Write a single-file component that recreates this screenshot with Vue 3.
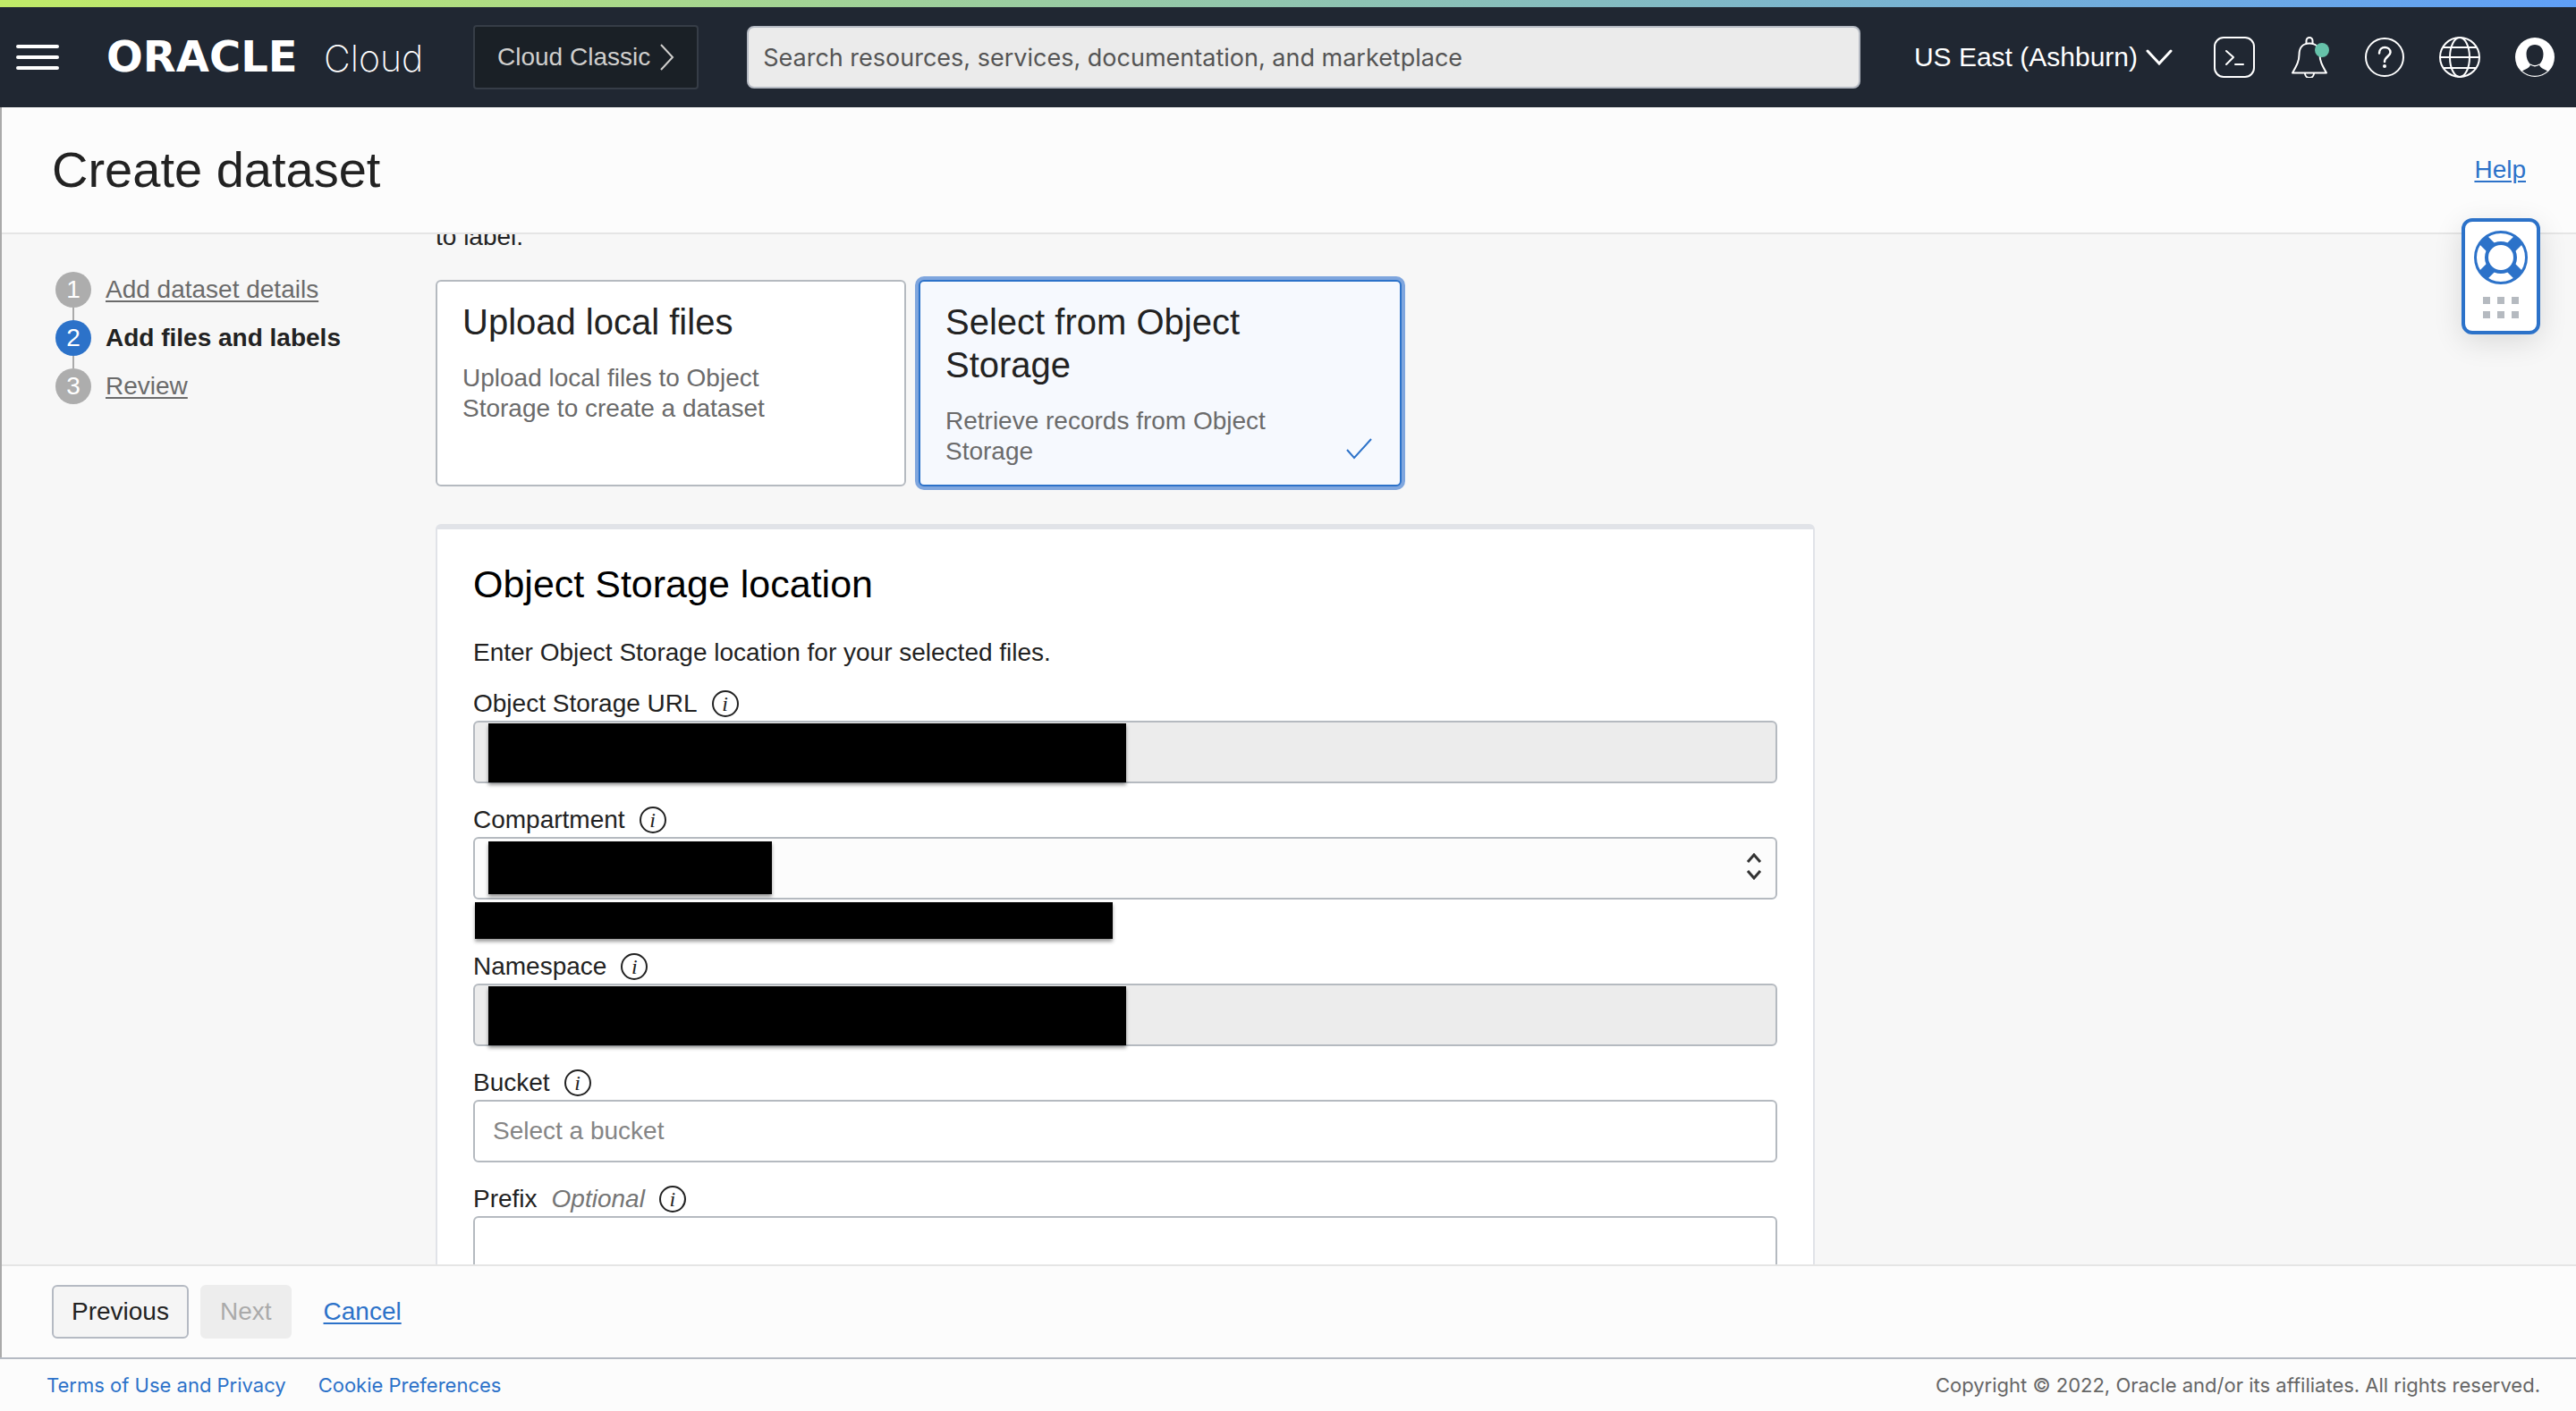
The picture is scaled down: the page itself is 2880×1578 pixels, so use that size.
<script setup>
import { ref } from 'vue'

const steps = [
  { number: 1, label: 'Add dataset details' },
  { number: 2, label: 'Add files and labels', current: true },
  { number: 3, label: 'Review' },
]

const source = ref('storage')
const sources = [
  { id: 'local', title: 'Upload local files', text: 'Upload local files to Object Storage to create a dataset' },
  { id: 'storage', title: 'Select from Object Storage', text: 'Retrieve records from Object Storage' },
]

const fields = [
  { id: 'url', label: 'Object Storage URL', disabled: true, mask: 'wide' },
  { id: 'compartment', label: 'Compartment', select: true, mask: 'short', hint: true },
  { id: 'namespace', label: 'Namespace', disabled: true, mask: 'wide' },
  { id: 'bucket', label: 'Bucket', placeholder: 'Select a bucket' },
  { id: 'prefix', label: 'Prefix', optional: true },
]
</script>

<template>
  <div class="page">
    <header class="topbar">
      <button class="icon-btn menu" aria-label="Menu">
        <svg width="48" height="28" viewBox="0 0 48 28">
          <path d="M2 2H46M2 14H46M2 26H46" stroke="#fff" stroke-width="4" stroke-linecap="round" />
        </svg>
      </button>
      <a class="brand" href="#"><span class="brand-name">ORACLE</span><span class="brand-product">Cloud</span></a>
      <button class="classic">
        Cloud Classic
        <svg width="16" height="30" viewBox="0 0 16 30" fill="none" stroke="currentColor" stroke-width="2">
          <path d="M1 1L14 15L1 29" />
        </svg>
      </button>
      <input class="search" type="search" aria-label="Search" placeholder="Search resources, services, documentation, and marketplace">
      <button class="region">
        US East (Ashburn)
        <svg width="30" height="18" viewBox="0 0 30 18" fill="none" stroke="#fff" stroke-width="3" stroke-linecap="round">
          <path d="M2 2L15 16L28 2" />
        </svg>
      </button>
      <nav class="tools" aria-label="Tools">
        <button class="icon-btn" aria-label="Developer tools">
          <svg width="46" height="46" viewBox="0 0 46 46" fill="none" stroke="#fff" stroke-width="2">
            <rect x="1" y="1" width="44" height="44" rx="10" />
            <path d="M14 16L22 23L14 31M24 31H33" stroke-linecap="round" stroke-linejoin="round" />
          </svg>
        </button>
        <button class="icon-btn" aria-label="Announcements">
          <svg width="46" height="46" viewBox="0 0 46 46" fill="none" stroke="#fff" stroke-width="2">
            <path d="M19.500 8V4.500a3.500 3.500 0 0 1 7 0V8M18 41a5 5 0 0 0 10 0" />
            <path d="M4 40.500C9 32 11.500 27 11.500 20C11.500 12 16 7.500 23 7.500S34.500 12 34.500 20C34.500 27 37 32 42 40.500Z" stroke-linejoin="round" />
            <circle cx="37" cy="15" r="8" fill="#66c2aa" stroke="none" />
          </svg>
        </button>
        <button class="icon-btn" aria-label="Help">
          <svg width="46" height="46" viewBox="0 0 46 46" fill="none" stroke="#fff" stroke-width="2">
            <circle cx="23" cy="23" r="21" />
            <path d="M17 18.500C17 9.500 29.500 10.500 29.500 17.500C29.500 22 23 22 23 28" stroke-width="2.500" stroke-linecap="round" />
            <circle cx="23" cy="33" r="2" fill="#fff" stroke="none" />
          </svg>
        </button>
        <button class="icon-btn" aria-label="Language">
          <svg width="46" height="46" viewBox="0 0 46 46" fill="none" stroke="#fff" stroke-width="2">
            <circle cx="23" cy="23" r="22" />
            <ellipse cx="23" cy="23" rx="11" ry="22" />
            <path d="M1 23H45M5 12H41M5 35H41" />
          </svg>
        </button>
        <button class="icon-btn" aria-label="Profile">
          <svg width="46" height="46" viewBox="0 0 46 46">
            <circle cx="23" cy="23" r="22" fill="#fff" />
            <path d="M9 38.500C13 36 18 34.500 18 31C15 28 13.500 24 13.500 19.500C13.500 13 17.500 9 23 9S32.500 13 32.500 19.500C32.500 24 31 28 28 31C28 34.500 33 36 37 38.500C29 45.500 17 45.500 9 38.500Z" fill="#202732" />
            <path d="M18 31C21 33 25 33 28 31" fill="none" stroke="#fff" stroke-width="1.500" />
          </svg>
        </button>
      </nav>
    </header>

    <div class="workspace">
      <div class="titlebar">
        <h1>Create dataset</h1>
        <a href="#">Help</a>
        <button class="support" aria-label="Support">
          <svg width="60" height="60" viewBox="0 0 60 60" fill="none" stroke="#2c72c9">
            <path d="M10.500 10.500L19 19M49.500 10.500L41 19M10.500 49.500L19 41M49.500 49.500L41 41" stroke-width="13" />
            <circle cx="30" cy="30" r="28.500" stroke-width="3" />
            <circle cx="30" cy="30" r="16" stroke-width="4" />
          </svg>
          <svg width="40" height="24" viewBox="0 0 40 24" fill="none" stroke="#b5bac0" stroke-width="8">
            <path d="M0 4H40M0 20H40" stroke-dasharray="8 8" />
          </svg>
        </button>
      </div>

      <div class="body">
        <nav class="steps" aria-label="Steps">
          <ol>
            <li v-for="s in steps" :key="s.number" :class="{ current: s.current }">
              <span class="bubble">{{ s.number }}</span>
              <strong v-if="s.current">{{ s.label }}</strong>
              <a v-else href="#">{{ s.label }}</a>
            </li>
          </ol>
        </nav>

        <main class="content">
          <p class="lead">to label.</p>
          <div class="cards">
            <button
              v-for="c in sources"
              :key="c.id"
              class="card"
              :class="{ selected: source === c.id }"
              :aria-pressed="source === c.id"
              @click="source = c.id"
            >
              <span class="card-title">{{ c.title }}</span>
              <span class="card-text">{{ c.text }}</span>
              <svg v-if="source === c.id" class="check" width="30" height="24" viewBox="0 0 30 24" fill="none" stroke="#2c72c9" stroke-width="2">
                <path d="M1 13L9 22L28 1" />
              </svg>
            </button>
          </div>

          <section class="panel">
            <h2>Object Storage location</h2>
            <p class="intro">Enter Object Storage location for your selected files.</p>
            <div v-for="f in fields" :key="f.id" class="field">
              <div class="label-row">
                <label :for="f.id">{{ f.label }}</label>
                <em v-if="f.optional">Optional</em>
                <button class="info" :aria-label="'About ' + f.label">i</button>
              </div>
              <div class="control">
                <select v-if="f.select" :id="f.id"></select>
                <input v-else :id="f.id" type="text" :disabled="f.disabled" :placeholder="f.placeholder">
                <svg v-if="f.select" class="arrows" width="18" height="30" viewBox="0 0 18 30" fill="none" stroke="#333" stroke-width="3">
                  <path d="M2 10L9 2L16 10M2 20L9 28L16 20" />
                </svg>
                <span v-if="f.mask" class="mask" :class="f.mask"></span>
              </div>
              <div v-if="f.hint" class="hint"><span class="mask below"></span></div>
            </div>
          </section>
        </main>
      </div>

      <div class="actions">
        <button class="btn">Previous</button>
        <button class="btn" disabled>Next</button>
        <a href="#">Cancel</a>
      </div>
    </div>

    <footer class="footer">
      <a href="#">Terms of Use and Privacy</a>
      <a href="#">Cookie Preferences</a>
      <span>Copyright © 2022, Oracle and/or its affiliates. All rights reserved.</span>
    </footer>
  </div>
</template>

<style>
body {
  margin: 0;
}
</style>

<style scoped>
* {
  box-sizing: border-box;
}

.page {
  display: flex;
  flex-direction: column;
  height: 100vh;
  font: 28px/34px "Liberation Sans", Arial, sans-serif;
  color: #222;
  background: #fcfcfc;
}

button,
input,
select {
  font: inherit;
  color: inherit;
  margin: 0;
}

button {
  cursor: pointer;
}

svg {
  display: block;
  flex: none;
}

a {
  color: #2c72c9;
  text-underline-offset: 3px;
  text-decoration-thickness: 2px;
}

.topbar {
  flex: none;
  display: flex;
  align-items: center;
  height: 120px;
  padding: 8px 23px 0 18px;
  color: #fff;
  background: linear-gradient(90deg, #c1eb68, #5f9ff7) top / 100% 8px no-repeat #202732;
}

.icon-btn {
  padding: 0;
  border: 0;
  background: none;
}

.menu {
  margin-right: 53px;
}

.brand {
  display: flex;
  align-items: baseline;
  width: 410px;
  color: #fff;
  text-decoration: none;
  line-height: 48px;
}

.brand-name {
  width: 243px;
  font-family: "DejaVu Sans", sans-serif;
  font-weight: 700;
  font-size: 48px;
}

.brand-product {
  font-family: Inter, sans-serif;
  font-weight: 200;
  font-size: 41px;
}

.classic {
  display: flex;
  align-items: center;
  gap: 11px;
  height: 72px;
  margin-right: 54px;
  padding: 0 25px;
  border: 2px solid #363d47;
  border-radius: 4px;
  color: #d0cfcd;
  background: #1a2026;
  white-space: nowrap;
}

.search {
  flex: 1;
  min-width: 0;
  height: 70px;
  padding: 0 16px;
  border: 2px solid #b5bac3;
  border-radius: 8px;
  background: #ebebeb;
  font-family: Inter, sans-serif;
  font-size: 27px;
  appearance: none;
}

.search::placeholder {
  color: #555;
}

.region {
  display: flex;
  align-items: center;
  gap: 9px;
  margin: 0 46px 0 60px;
  padding: 0;
  border: 0;
  background: none;
  font-size: 30px;
  white-space: nowrap;
}

.tools {
  display: flex;
  gap: 38px;
}

.workspace {
  flex: 1;
  min-height: 0;
  display: flex;
  flex-direction: column;
  border-left: 2px solid #aaa;
}

.titlebar {
  position: relative;
  flex: none;
  display: flex;
  align-items: center;
  justify-content: space-between;
  height: 142px;
  padding: 0 56px;
  border-bottom: 2px solid #e5e5e5;
}

h1 {
  margin: 0;
  font-weight: 400;
  font-size: 56px;
  line-height: 64px;
}

.support {
  position: absolute;
  z-index: 1;
  top: 124px;
  right: 40px;
  display: flex;
  flex-direction: column;
  align-items: center;
  gap: 14px;
  width: 88px;
  height: 130px;
  padding: 10px 0;
  border: 4px solid #2c72c9;
  border-radius: 12px;
  background: #fff;
  box-shadow: 0 8px 32px rgba(0, 0, 0, 0.12);
}

.body {
  flex: 1;
  min-height: 0;
  display: flex;
  overflow: hidden;
  background: #f7f7f7;
}

.steps {
  flex: none;
  width: 485px;
  padding: 42px 60px;
}

.steps ol {
  display: flex;
  flex-direction: column;
  gap: 14px;
  margin: 0;
  padding: 0;
  list-style: none;
}

.steps li {
  position: relative;
  display: flex;
  align-items: center;
  gap: 16px;
  height: 40px;
  white-space: nowrap;
}

.steps li + li::before {
  content: "";
  position: absolute;
  left: 19px;
  bottom: 100%;
  width: 2px;
  height: 14px;
  background: #aaa;
}

.steps a {
  color: #6b6b6b;
}

.bubble {
  width: 40px;
  border-radius: 50%;
  line-height: 40px;
  text-align: center;
  color: #fff;
  background: #adadad;
}

.current .bubble {
  background: #2c72c9;
}

.content {
  flex: 1;
  max-width: 1542px;
}

.lead {
  margin: -14px 0 31px;
}

.cards {
  display: flex;
  gap: 14px;
}

.card {
  position: relative;
  display: flex;
  flex-direction: column;
  gap: 22px;
  width: 526px;
  padding: 21px 96px 20px 28px;
  border: 2px solid #b5bac0;
  border-radius: 6px;
  background: #fff;
  text-align: left;
}

.selected {
  width: 540px;
  border-color: #2c72c9;
  background: #f6f9fe;
  box-shadow: 0 0 0 4px #7fa6de;
}

.card-title {
  font-size: 40px;
  line-height: 48px;
}

.card-text {
  color: #6b6b6b;
}

.check {
  position: absolute;
  right: 30px;
  bottom: 28px;
}

.panel {
  margin-top: 42px;
  padding: 36px 40px;
  border: 2px solid #e1e3e8;
  border-top-width: 6px;
  border-radius: 6px;
  background: #fff;
}

h2 {
  margin: 0 0 34px;
  color: #000;
  font-weight: 400;
  font-size: 43px;
  line-height: 50px;
}

.intro {
  margin: 0 0 21px;
  line-height: 36px;
}

.field {
  margin-bottom: 23px;
}

.label-row {
  display: flex;
  align-items: center;
  gap: 16px;
  height: 36px;
  margin-bottom: 1px;
}

.label-row em {
  color: #757575;
}

.info {
  width: 30px;
  height: 30px;
  padding: 0;
  border: 2px solid #222;
  border-radius: 50%;
  background: none;
  font: italic 24px/24px "Liberation Serif", serif;
}

.control {
  position: relative;
}

.control input,
.control select {
  display: block;
  width: 100%;
  height: 70px;
  padding: 0 20px;
  border: 2px solid #b5bac0;
  border-radius: 6px;
  background: #fff;
  appearance: none;
}

.control select {
  background: #fcfcfc;
}

.control input:disabled {
  background: #ececec;
}

.control input::placeholder {
  color: #858585;
}

.arrows {
  position: absolute;
  top: 18px;
  right: 17px;
  pointer-events: none;
}

.mask {
  position: absolute;
  background: #000;
  box-shadow: 0 3px 4px rgba(0, 0, 0, 0.4);
}

.wide {
  top: 3px;
  left: 17px;
  width: 713px;
  height: 66px;
}

.short {
  top: 5px;
  left: 17px;
  width: 317px;
  height: 59px;
}

.hint {
  position: relative;
  height: 34px;
}

.below {
  top: 3px;
  left: 2px;
  width: 713px;
  height: 41px;
}

.actions {
  flex: none;
  display: flex;
  align-items: center;
  height: 104px;
  padding: 0 56px;
  border-top: 2px solid #e5e5e5;
}

.btn {
  height: 60px;
  margin-right: 13px;
  padding: 0 20px;
  border: 2px solid #b5bac3;
  border-radius: 6px;
  background: #f5f5f5;
}

.btn:disabled {
  margin-right: 36px;
  border-color: #ededed;
  color: #aaa;
  background: #ededed;
}

.footer {
  flex: none;
  display: flex;
  align-items: center;
  gap: 36px;
  height: 60px;
  padding: 0 40px 0 52px;
  border-top: 2px solid #b5bac3;
  font-family: Inter, sans-serif;
  font-size: 22px;
}

.footer a {
  text-decoration: none;
}

.footer span {
  margin-left: auto;
  color: #666;
}
</style>
